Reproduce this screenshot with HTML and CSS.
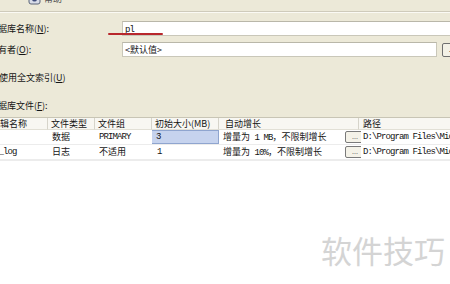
FILE: index.html
```html
<!DOCTYPE html>
<html lang="zh-CN">
<head>
    <meta charset="UTF-8">
    <meta name="viewport" content="width=device-width, initial-scale=1.0">
    <title>新建数据库</title>
    <link rel="stylesheet" href="styles.css">
</head>
<body>
    <div class="page">
        <div class="toolbar">
            <div class="tool">
                <svg class="tool-icon" width="13" height="12" viewBox="0 0 13 12">
                    <rect x="1" y="1" width="11" height="10" rx="2" fill="#d8dce8" stroke="#5a6478"/>
                    <circle cx="6.5" cy="6" r="2.5" fill="#3c4a78"/>
                </svg>
                <span class="tool-text">帮助</span>
            </div>
        </div>

        <div class="form">
            <div class="field">
                <label class="field-label">数据库名称(<u>N</u>):</label>
                <div class="input wide"><span class="mono">pl</span></div>
            </div>
            <div class="field">
                <label class="field-label">所有者(<u>O</u>):</label>
                <div class="input owner">&lt;默认值&gt;</div>
                <button class="pick">...</button>
            </div>
            <div class="check-row">
                <span class="checkbox"></span>
                <span>使用全文索引(<u>U</u>)</span>
            </div>
            <div class="section-label">数据库文件(<u>F</u>):</div>
        </div>

        <div class="files">
            <div class="grid">
                <div class="th">逻辑名称</div>
                <div class="th">文件类型</div>
                <div class="th">文件组</div>
                <div class="th">初始大小(MB)</div>
                <div class="th span2">自动增长</div>
                <div class="th last">路径</div>

                <div class="td mono name">pl</div>
                <div class="td">数据</div>
                <div class="td mono">PRIMARY</div>
                <div class="td"><div class="editing mono">3</div></div>
                <div class="td">增量为<span class="mono"> 1 MB</span>，不限制增长</div>
                <div class="td btn-cell"><button class="cell-btn">...</button></div>
                <div class="td mono path">D:\Program Files\Microsoft SQL Server</div>

                <div class="td mono name">pl_log</div>
                <div class="td">日志</div>
                <div class="td">不适用</div>
                <div class="td mono size">1</div>
                <div class="td">增量为<span class="mono"> 10%</span>，不限制增长</div>
                <div class="td btn-cell"><button class="cell-btn">...</button></div>
                <div class="td mono path">D:\Program Files\Microsoft SQL Server</div>
            </div>
        </div>
    </div>

    <span class="mark"></span>
    <div class="watermark">软件技巧</div>
</body>
</html>
```

FILE: styles.css
```css
* {
    box-sizing: border-box;
    margin: 0;
    padding: 0;
}
html, body {
    width: 450px;
    height: 284px;
    overflow: hidden;
}
body {
    font-family: "Noto Sans CJK SC", sans-serif;
    font-size: 9px;
    color: #141414;
    background-color: #ece9d8;
    position: relative;
}
u {
    text-decoration: underline;
}
.page {
    margin-left: -11px;
    width: 475px;
    height: 284px;
    display: flex;
    flex-direction: column;
}
.mono {
    font-family: "Liberation Mono", monospace;
    letter-spacing: -0.9px;
}

/* toolbar, mostly scrolled off the top */
.toolbar {
    height: 12px;
    border-bottom: 1px solid #cfcbbb;
    box-shadow: 0 1px 0 #fbfaf4;
    overflow: hidden;
}
.tool {
    display: flex;
    align-items: center;
    gap: 3px;
    margin-left: 39px;
    margin-top: -8px;
}
.tool-text {
    color: #555;
}

/* form */
.form {
    padding-top: 9px;
}
.field {
    display: flex;
    align-items: center;
    height: 15px;
    margin-bottom: 6px;
}
.field-label {
    width: 133px;
    line-height: 15px;
}
.input {
    height: 15px;
    background: #fff;
    border: 1px solid #c9c7b9;
    border-top-color: #b9b7a9;
    padding-left: 2px;
    line-height: 13px;
}
.wide {
    flex: 1;
}
.owner {
    width: 315px;
}
.pick {
    width: 20px;
    height: 14px;
    margin-left: 5px;
    border: 1px solid #6f6f6f;
    border-radius: 2px;
    background: #f3f1e6;
    font-size: 8px;
    line-height: 8px;
}
.check-row {
    display: flex;
    align-items: center;
    gap: 2px;
    height: 12px;
    margin-top: 14px;
}
.checkbox {
    width: 11px;
    height: 11px;
    margin-left: -3px;
    border: 1px solid #1c5180;
    background: #fff;
}
.section-label {
    height: 12px;
    line-height: 12px;
    margin-top: 17px;
}

/* files grid */
.files {
    flex: 1;
    margin-top: 5px;
    background: #fff;
    border-top: 1px solid #c8c5b5;
}
.grid {
    display: grid;
    grid-template-columns: 59px 47px 57px 67px 120px 22px 1fr;
    grid-auto-rows: 15px;
    grid-template-rows: 12px;
    border-bottom: 1px solid #ececec;
}
.th {
    background: #f8f7f2;
    border-right: 1px solid #d6d4ca;
    border-bottom: 1px solid #e2e0d6;
    padding-left: 3px;
    line-height: 11px;
    white-space: nowrap;
    overflow: hidden;
}
.th:first-child {
    padding-left: 2px;
}
.th.span2 {
    grid-column: span 2;
    padding-left: 6px;
    margin-right: 2px;
}
.th.last {
    border-right: none;
    margin-left: -2px;
    padding-left: 4px;
}
.td {
    border-bottom: 1px solid #ececec;
    padding-left: 4px;
    line-height: 14px;
    white-space: nowrap;
    overflow: hidden;
}
.td.name {
    padding-left: 0;
    text-indent: 0.5px;
}
.td:nth-child(7n+3) {
    padding-left: 3px;
}
.td:nth-child(7n+5) {
    padding-left: 6px;
}
.td.size {
    padding-left: 5px;
}
.editing {
    height: 14px;
    margin-left: -4px;
    background: #c6d3ee;
    border: 1px solid #8fa5cf;
    padding-left: 4px;
    line-height: 12px;
}
.btn-cell {
    padding: 1px 0 0 2px;
}
.cell-btn {
    display: block;
    width: 20px;
    height: 12px;
    border: 1px solid #7a7a7a;
    border-radius: 2px;
    background: #f4f2e8;
    font-size: 7px;
    line-height: 6px;
    color: #333;
}
.path {
    padding-left: 2px;
}

/* annotation and watermark */
.mark {
    position: absolute;
    left: 108px;
    top: 33px;
    width: 55px;
    height: 2px;
    border-radius: 1px;
    background: #b8272c;
}
.watermark {
    position: absolute;
    right: 5px;
    top: 232px;
    font-size: 31px;
    line-height: 36px;
    color: #d4d4d4;
}
```
